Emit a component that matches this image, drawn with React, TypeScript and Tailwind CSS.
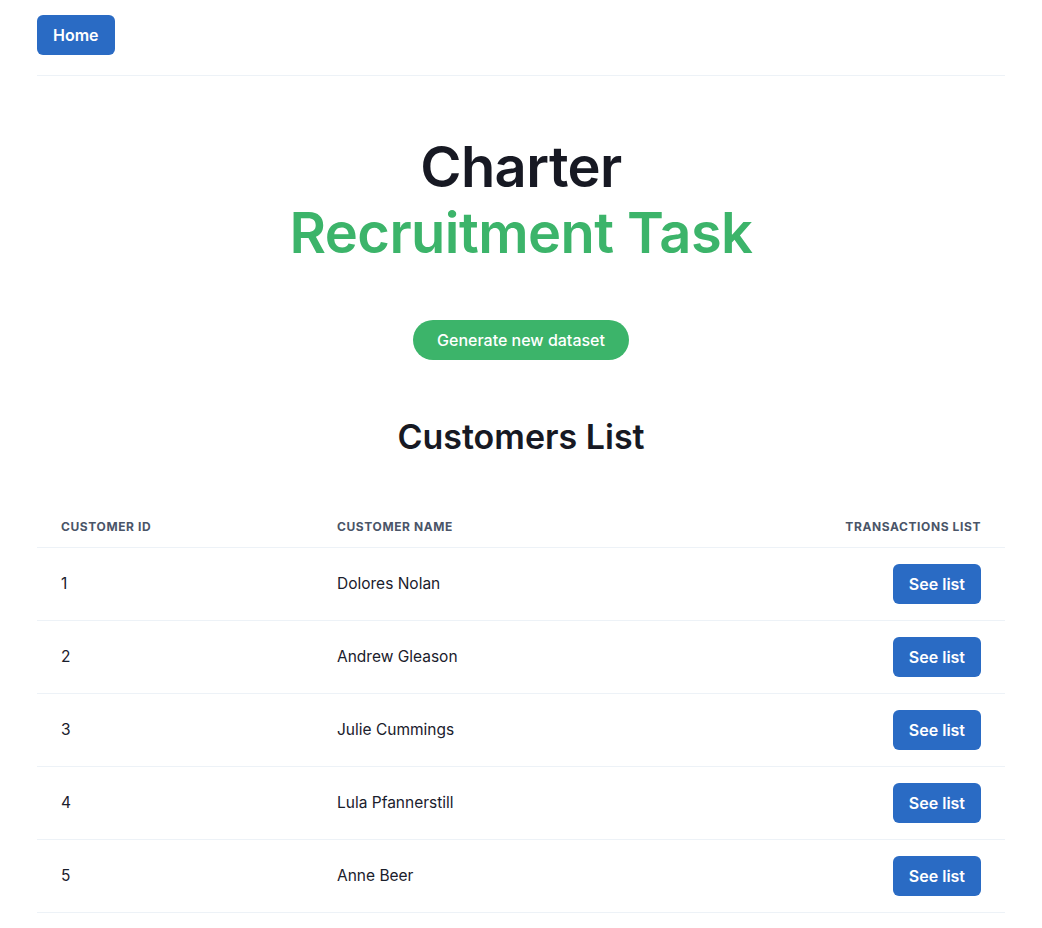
import React from "react";

const CUSTOMERS = [
  { id: 1, name: "Dolores Nolan" },
  { id: 2, name: "Andrew Gleason" },
  { id: 3, name: "Julie Cummings" },
  { id: 4, name: "Lula Pfannerstill" },
  { id: 5, name: "Anne Beer" },
];

const App = () => {
  return (
    <div className="min-h-screen bg-white text-[#1a202c] font-['Inter',sans-serif]">
      <div className="px-[37px]">
        {/* Nav */}
        <nav className="pt-[15px] pb-5 border-b border-[#edf2f7]">
          <button className="h-10 px-4 rounded-md bg-[#2a6bc4] text-white font-semibold text-base">
            Home
          </button>
        </nav>

        {/* Hero */}
        <div className="flex flex-col items-center pt-[58px]">
          <h1 className="text-center text-[56px] leading-[66px] font-semibold tracking-[-0.01em] text-[#171923]">
            Charter
            <br />
            <span className="text-[#3cb46a]">Recruitment Task</span>
          </h1>
          <button className="mt-[54px] h-10 px-6 rounded-full bg-[#3cb46a] text-white font-medium text-base">
            Generate new dataset
          </button>
          <h2 className="mt-[55px] text-[34px] leading-[43px] font-semibold text-[#171923]">
            Customers List
          </h2>
        </div>

        {/* Table */}
        <table className="mt-[49px] w-full table-fixed border-collapse">
          <thead>
            <tr className="border-b border-[#edf2f7]">
              <th className="w-[276px] px-6 py-3 text-left text-xs leading-4 font-bold uppercase tracking-wider text-[#4a5568]">
                Customer ID
              </th>
              <th className="px-6 py-3 text-left text-xs leading-4 font-bold uppercase tracking-wider text-[#4a5568]">
                Customer Name
              </th>
              <th className="w-[300px] px-6 py-3 text-right text-xs leading-4 font-bold uppercase tracking-wider text-[#4a5568]">
                Transactions List
              </th>
            </tr>
          </thead>
          <tbody>
            {CUSTOMERS.map((c) => (
              <tr key={c.id} className="border-b border-[#edf2f7]">
                <td className="px-6 py-4 text-[15.5px]">{c.id}</td>
                <td className="px-6 py-4 text-[15.5px]">{c.name}</td>
                <td className="px-6 py-4 text-right">
                  <button className="h-10 px-4 rounded-md bg-[#2a6bc4] text-white font-semibold text-base">
                    See list
                  </button>
                </td>
              </tr>
            ))}
          </tbody>
        </table>
      </div>
    </div>
  );
};

export default App;
